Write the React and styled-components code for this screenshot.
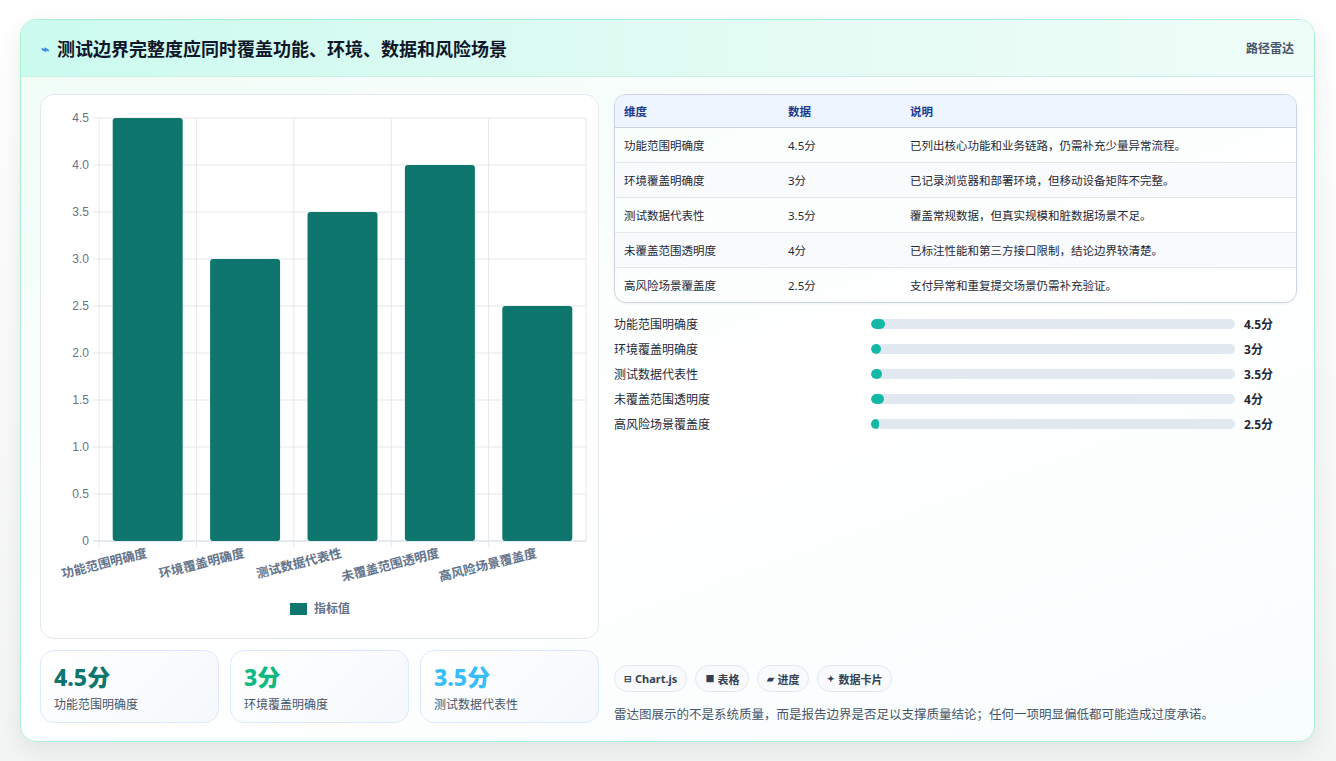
import styled, { createGlobalStyle } from "styled-components"

const GlobalStyle = createGlobalStyle`
  body{
    margin: 0;
    background: #f6f7f7;
    font-family: "Noto Sans", "Noto Sans CJK SC", sans-serif;
  }
`

const rows = [
  { name: "功能范围明确度", value: 4.5, note: "已列出核心功能和业务链路，仍需补充少量异常流程。" },
  { name: "环境覆盖明确度", value: 3, note: "已记录浏览器和部署环境，但移动设备矩阵不完整。" },
  { name: "测试数据代表性", value: 3.5, note: "覆盖常规数据，但真实规模和脏数据场景不足。" },
  { name: "未覆盖范围透明度", value: 4, note: "已标注性能和第三方接口限制，结论边界较清楚。" },
  { name: "高风险场景覆盖度", value: 2.5, note: "支付异常和重复提交场景仍需补充验证。" },
]

const stats = [
  { value: "4.5分", label: "功能范围明确度", color: "#0f766e" },
  { value: "3分", label: "环境覆盖明确度", color: "#10b981" },
  { value: "3.5分", label: "测试数据代表性", color: "#38bdf8" },
]

const chips = [
  { icon: "⊟", text: "Chart.js" },
  { icon: "■", text: "表格" },
  { icon: "▰", text: "进度" },
  { icon: "✦", text: "数据卡片" },
]

const BarChart = () => {
  const left = 58, right = 545, top = 23, bottom = 446
  const unit = (bottom - top) / 4.5
  const step = (right - left) / rows.length
  const ticks = [0, 0.5, 1, 1.5, 2, 2.5, 3, 3.5, 4, 4.5]
  return (
    <svg width="558" height="543" viewBox="0 0 558 543">
      {ticks.map(t => {
        const y = bottom - t * unit
        return (
          <g key={t}>
            <line x1={left - 6} x2={right} y1={y} y2={y} stroke={t === 0 ? "#cbd5e1" : "#e5e7eb"} />
            <text x={left - 10} y={y + 4} textAnchor="end" fontSize="12" fill="#6b7280" fontFamily="Liberation Sans, sans-serif">{t === 0 ? "0" : t.toFixed(1)}</text>
          </g>
        )
      })}
      {rows.map((r, i) => (
        <line key={i} x1={left + i * step} x2={left + i * step} y1={top} y2={bottom + 6} stroke="#e5e7eb" />
      ))}
      <line x1={right} x2={right} y1={top} y2={bottom} stroke="#e5e7eb" />
      {rows.map((r, i) => {
        const cx = left + i * step + step / 2
        const h = r.value * unit
        return (
          <g key={r.name}>
            <rect x={cx - 35} y={bottom - h} width="70" height={h} rx="3" fill="#0f766e" />
            <text x={cx} y={bottom + 16} textAnchor="end" fontSize="12.5" fontWeight="700" fill="#64748b"
              transform={`rotate(-14 ${cx} ${bottom + 16})`}>{r.name}</text>
          </g>
        )
      })}
      <rect x="249" y="508" width="17" height="12" fill="#0f766e" />
      <text x="273" y="518" fontSize="12" fill="#64748b" fontWeight="700">指标值</text>
    </svg>
  )
}

const App = () => (
  <>
    <GlobalStyle />
    <Page>
      <Card>
        <Header>
          <Title><Bolt>⌁</Bolt>测试边界完整度应同时覆盖功能、环境、数据和风险场景</Title>
          <Tag>路径雷达</Tag>
        </Header>
        <Body>
          <LeftCol>
            <ChartCard><BarChart /></ChartCard>
            <StatRow>
              {stats.map(s => (
                <StatCard key={s.label}>
                  <StatValue $color={s.color}>{s.value}</StatValue>
                  <StatLabel>{s.label}</StatLabel>
                </StatCard>
              ))}
            </StatRow>
          </LeftCol>
          <RightCol>
            <Table>
              <thead>
                <tr><Th>维度</Th><Th>数据</Th><Th>说明</Th></tr>
              </thead>
              <tbody>
                {rows.map((r, i) => (
                  <Tr key={r.name} $alt={i % 2 === 1}>
                    <Td>{r.name}</Td><Td>{r.value}分</Td><Td>{r.note}</Td>
                  </Tr>
                ))}
              </tbody>
            </Table>
            <Bars>
              {rows.map(r => (
                <BarRow key={r.name}>
                  <BarLabel>{r.name}</BarLabel>
                  <Track><Fill style={{ width: `${r.value * 0.9}%` }} /></Track>
                  <BarValue>{r.value}分</BarValue>
                </BarRow>
              ))}
            </Bars>
            <Spacer />
            <Chips>
              {chips.map(c => <Chip key={c.text}><span>{c.icon}</span>{c.text}</Chip>)}
            </Chips>
            <Note>雷达图展示的不是系统质量，而是报告边界是否足以支撑质量结论；任何一项明显偏低都可能造成过度承诺。</Note>
          </RightCol>
        </Body>
      </Card>
    </Page>
  </>
)

const Page = styled.div`
  padding: 19px 21px 20px 20px;
  background: linear-gradient(#ffffff, #f3f4f4);
  min-height: 761px;
  box-sizing: border-box;
`

const Card = styled.div`
  border: 1px solid #a7f3d0;
  border-radius: 16px;
  background: linear-gradient(160deg, #f0fdf7 0%, #ffffff 55%, #f8fdfd 100%);
  box-shadow: 0 8px 24px rgba(15, 23, 42, 0.08);
  overflow: hidden;
  height: 721px;
  display: flex;
  flex-direction: column;
`

const Header = styled.div`
  height: 56px;
  flex: none;
  display: flex;
  align-items: center;
  justify-content: space-between;
  padding: 0 20px 0 20px;
  background: linear-gradient(90deg, #ccfbef, #e4fbf4 60%, #effdf9);
  border-bottom: 1px solid #c9efe3;
`

const Title = styled.h1`
  margin: 0;
  font-size: 18px;
  font-weight: 700;
  color: #0f172a;
  display: flex;
  align-items: center;
  gap: 8px;
`

const Bolt = styled.span`
  color: #3b82f6;
  font-size: 14px;
`

const Tag = styled.span`
  font-size: 12px;
  color: #475569;
  font-weight: 600;
`

const Body = styled.div`
  flex: 1;
  display: grid;
  grid-template-columns: 559px 683px;
  gap: 15px;
  padding: 17px 19px 18px 19px;
`

const LeftCol = styled.div`
  display: flex;
  flex-direction: column;
  gap: 11px;
`

const ChartCard = styled.div`
  height: 543px;
  background: #fff;
  border: 1px solid #e2e8f0;
  border-radius: 14px;
  overflow: hidden;
`

const StatRow = styled.div`
  display: grid;
  grid-template-columns: repeat(3, 1fr);
  gap: 11px;
`

const StatCard = styled.div`
  height: 73px;
  box-sizing: border-box;
  padding: 12px 13px;
  border: 1px solid #dbeafe;
  border-radius: 14px;
  background: linear-gradient(135deg, #ffffff, #f5f8fc);
`

const StatValue = styled.div`
  font-size: 23px;
  font-weight: 800;
  line-height: 28px;
  color: ${p => p.$color};
`

const StatLabel = styled.div`
  font-size: 12px;
  color: #475569;
  margin-top: 4px;
`

const RightCol = styled.div`
  display: flex;
  flex-direction: column;
`

const Table = styled.table`
  width: 100%;
  border-collapse: separate;
  border-spacing: 0;
  border: 1px solid #cbd5e1;
  border-radius: 12px;
  overflow: hidden;
  font-size: 11.5px;
  box-shadow: 0 1px 3px rgba(15, 23, 42, 0.06);
`

const Th = styled.th`
  text-align: left;
  height: 32px;
  padding: 0 9px;
  background: #eef5ff;
  color: #1e3a8a;
  font-weight: 700;
  border-bottom: 1px solid #cbd5e1;
  &:nth-child(1){ width: 146px; }
  &:nth-child(2){ width: 104px; }
`

const Tr = styled.tr`
  background: ${p => (p.$alt ? "#f8fafc" : "rgba(255,255,255,0.2)")};
  &:not(:last-child) td{ border-bottom: 1px solid #e2e8f0; }
`

const Td = styled.td`
  height: 34px;
  padding: 0 9px;
  color: #1f2937;
`

const Bars = styled.div`
  margin-top: 12px;
  display: flex;
  flex-direction: column;
  gap: 7px;
`

const BarRow = styled.div`
  display: grid;
  grid-template-columns: 257px 1fr 62px;
  align-items: center;
  height: 18px;
`

const BarLabel = styled.span`
  font-size: 12px;
  color: #1f2937;
`

const Track = styled.div`
  height: 10px;
  border-radius: 5px;
  background: #e2e8f0;
  overflow: hidden;
`

const Fill = styled.div`
  height: 100%;
  max-width: 14px;
  border-radius: 5px;
  background: #14b8a6;
`

const BarValue = styled.span`
  font-size: 12px;
  font-weight: 700;
  color: #1f2937;
  padding-left: 9px;
`

const Spacer = styled.div`
  flex: 1;
`

const Chips = styled.div`
  display: flex;
  gap: 8px;
`

const Chip = styled.span`
  height: 27px;
  box-sizing: border-box;
  padding: 0 9px;
  display: inline-flex;
  align-items: center;
  gap: 3px;
  font-size: 11px;
  font-weight: 700;
  color: #334155;
  border: 1px solid #e2e8f0;
  border-radius: 14px;
  background: #f8fafc;
  span{ font-size: 9px; }
`

const Note = styled.p`
  margin: 12px 0 0;
  font-size: 12.5px;
  color: #475569;
`

export default App
